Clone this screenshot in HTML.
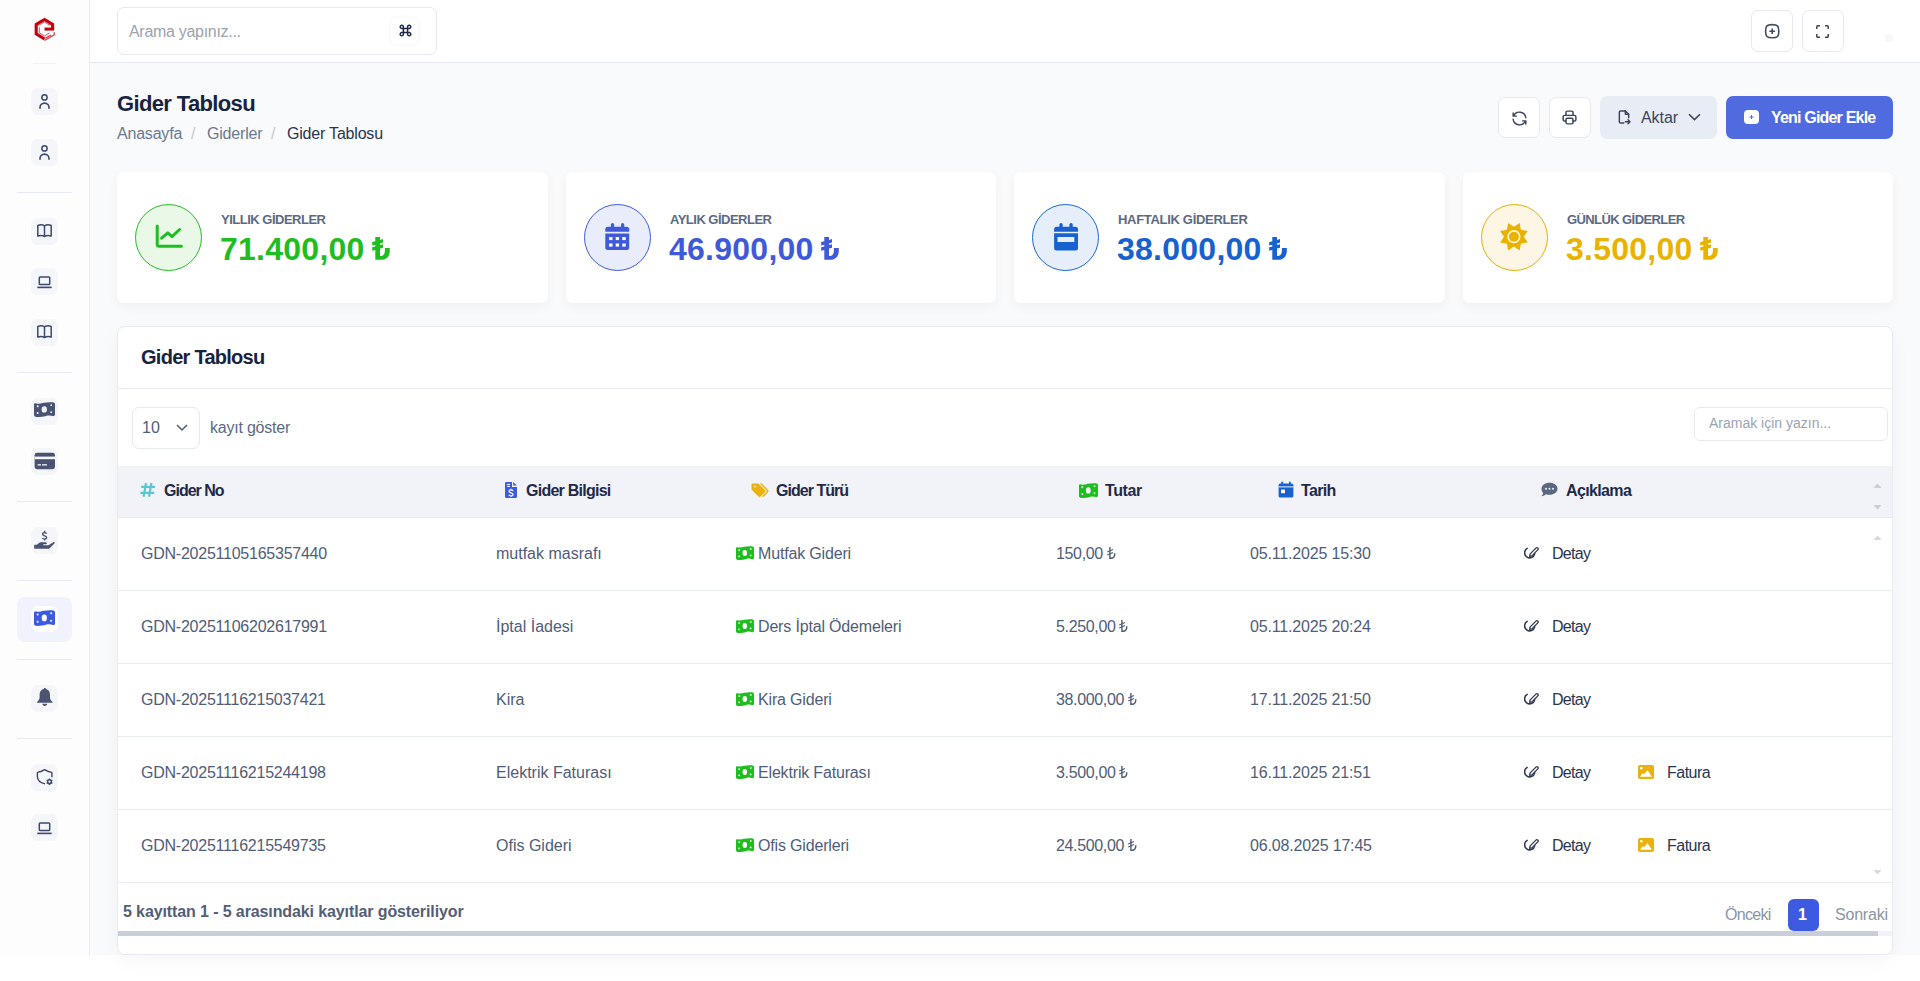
<!DOCTYPE html>
<html lang="tr">
<head>
<meta charset="utf-8">
<title>Gider Tablosu</title>
<style>
*{box-sizing:border-box;margin:0;padding:0}
html,body{width:1920px;height:981px;overflow:hidden;background:#fff;font-family:"Liberation Sans",sans-serif;color:#4f5d78}
.app{position:absolute;left:0;top:0;width:1920px;height:955px;background:#f9fafb}
.abs{position:absolute}
.side{position:absolute;left:0;top:0;width:90px;height:955px;background:#fdfdfe;border-right:1px solid #e7eaf3}
.tile{position:absolute;left:31px;width:27px;height:27px;border-radius:7px;background:#f4f6fa}
.tile svg{position:absolute;left:0;top:0}
.sep{position:absolute;left:17px;width:55px;height:1px;background:#e6e9f2}
.topbar{position:absolute;left:90px;top:0;width:1830px;height:63px;background:#fff;border-bottom:1px solid #e6e9f2}
.box{position:absolute;background:#fff;border:1px solid #e6e9f2;border-radius:7px}
.txt{position:absolute;white-space:nowrap;line-height:1}
.card{position:absolute;top:172px;width:430px;height:131px;background:#fff;border-radius:7px;box-shadow:0 4px 12px rgba(0,0,0,.045)}
.circ{position:absolute;left:18px;top:31.6px;width:67px;height:67px;border-radius:50%}
.lbl{position:absolute;left:104px;top:41px;font-weight:bold;font-size:13px;color:#5b6a84;white-space:nowrap;line-height:1}
.val{position:absolute;left:103px;top:61px;font-weight:bold;font-size:32px;letter-spacing:0.25px;white-space:nowrap;line-height:1}
.tcard{position:absolute;left:117px;top:326px;width:1776px;height:629px;background:#fff;border:1px solid #e7eaf2;border-radius:8px;box-shadow:0 6px 20px rgba(0,0,0,.04);overflow:hidden}
.th{position:absolute;font-weight:bold;font-size:16px;color:#1e2a4a;white-space:nowrap;line-height:1}
.td{position:absolute;font-size:16px;color:#4f5d78;white-space:nowrap;line-height:1}
.rowline{position:absolute;left:0;width:1774px;height:1px;background:#e8ebf3}
</style>
</head>
<body>
<div class="app">

<div class="side">
<svg class="abs" style="left:20px;top:10px" width="50" height="40" viewBox="0 0 50 40">
<path d="M32.6 19.2 V14.4 L24.5 9.5 L16.2 14.4 V23.9 L24.5 29" fill="none" stroke="#c4000f" stroke-width="3.1" stroke-linejoin="miter"/>
<rect x="24.5" y="17.6" width="9.6" height="3" fill="#c4000f"/>
<path d="M18.2 15.6 L24.5 12 L30.3 15.6 M19.3 17.2 V22.9 L24.5 25.9 L29.6 22.9" fill="none" stroke="#d6404a" stroke-width="0.9"/>
<path d="M24.5 30.6 L34.2 25 V22.3 M25.2 28.3 L31 24.9" fill="none" stroke="#d0303a" stroke-width="1.2"/>
</svg>
<div class="sep" style="top:63px;left:33px;width:23px;background:#f2f3f7"></div>
<div class="tile" style="top:88px"><svg width="27" height="27" viewBox="0 0 27 27"><circle cx="13.5" cy="9.4" r="2.6" fill="none" stroke="#3d4a6a" stroke-width="1.5"/><path d="M9 20.8 V19.6 A4.5 4.5 0 0 1 18 19.6 V20.8" fill="none" stroke="#3d4a6a" stroke-width="1.6"/></svg></div>
<div class="tile" style="top:139px"><svg width="27" height="27" viewBox="0 0 27 27"><circle cx="13.5" cy="9.4" r="2.6" fill="none" stroke="#3d4a6a" stroke-width="1.5"/><path d="M9 20.8 V19.6 A4.5 4.5 0 0 1 18 19.6 V20.8" fill="none" stroke="#3d4a6a" stroke-width="1.6"/></svg></div>
<div class="sep" style="top:192px"></div>
<div class="tile" style="top:218px"><svg width="27" height="27" viewBox="0 0 27 27"><path transform="translate(0,-0.7)" d="M6.8 8.2 C9 7.3 11.5 7.3 13.5 8.6 C15.5 7.3 18 7.3 20.2 8.2 V18.8 C18 18.1 15.5 18.1 13.5 19.2 C11.5 18.1 9 18.1 6.8 18.8 Z M13.5 8.6 V19" fill="none" stroke="#3d4a6a" stroke-width="1.5" stroke-linejoin="round"/></svg></div>
<div class="tile" style="top:268px"><svg width="27" height="27" viewBox="0 0 27 27"><rect x="8.3" y="9" width="10.4" height="7.6" rx="0.8" fill="none" stroke="#3d4a6a" stroke-width="1.5"/><path d="M6.3 19.4 H20.7" stroke="#3d4a6a" stroke-width="1.6"/></svg></div>
<div class="tile" style="top:319px"><svg width="27" height="27" viewBox="0 0 27 27"><path transform="translate(0,-0.7)" d="M6.8 8.2 C9 7.3 11.5 7.3 13.5 8.6 C15.5 7.3 18 7.3 20.2 8.2 V18.8 C18 18.1 15.5 18.1 13.5 19.2 C11.5 18.1 9 18.1 6.8 18.8 Z M13.5 8.6 V19" fill="none" stroke="#3d4a6a" stroke-width="1.5" stroke-linejoin="round"/></svg></div>
<div class="sep" style="top:372px"></div>
<div class="tile" style="top:398px"></div>
<svg class="abs" style="left:34px;top:402px" width="21" height="15" viewBox="0 0 20 15" preserveAspectRatio="none"><path d="M0 2.6 C0 1.4 1 1.1 2.2 1.4 C4.6 2.2 6.6 1.4 9 0.8 C11.5 0.2 14.5 0.1 17.6 0.2 C19 0.3 20 1 20 2 V12.6 C20 13.6 19.2 14.4 18 14.1 C16 13.3 13.6 13.3 11.4 13.9 C9 14.6 6.4 15 3.2 15 C1.4 15 0 14.4 0 13 Z" fill="#4a5472"/><ellipse cx="9.8" cy="7.4" rx="2.5" ry="3.2" fill="#f4f6fa"/><circle cx="3.5" cy="4.3" r="0.95" fill="#f4f6fa"/><circle cx="16.4" cy="3.1" r="0.95" fill="#f4f6fa"/><circle cx="3.5" cy="11" r="0.95" fill="#f4f6fa"/><circle cx="16.3" cy="10.1" r="0.95" fill="#f4f6fa"/></svg>
<div class="tile" style="top:448px"><svg width="27" height="27" viewBox="0 0 27 27"><rect x="3.6" y="4.8" width="20.4" height="16.4" rx="2.4" fill="#4a5472"/><rect x="3.6" y="8.6" width="20.4" height="2.6" fill="#f4f6fa"/><rect x="6.6" y="16.2" width="3.4" height="1.3" fill="#f4f6fa"/><rect x="11" y="16.2" width="5" height="1.3" fill="#f4f6fa"/></svg></div>
<div class="sep" style="top:501px"></div>
<div class="tile" style="top:527px"><svg width="27" height="27" viewBox="0 0 27 27"><path d="M15.6 6.7 C15.2 5.9 14.5 5.6 13.6 5.6 C12.4 5.6 11.6 6.2 11.6 7.1 C11.6 9.2 15.6 8.6 15.6 10.6 C15.6 11.6 14.7 12.1 13.6 12.1 C12.6 12.1 11.8 11.7 11.4 11 M13.6 3.8 V5.6 M13.6 12.1 V13.4" fill="none" stroke="#4a5472" stroke-width="1.4"/><path d="M3.2 17.8 H5.8 L8 16 C8.4 15.4 9 15.2 9.8 15.2 H15 C16 15.2 16 17.3 15 17.3 H12.6 C12 17.3 12 18.2 12.6 18.2 H17.4 L22.4 15.2 C23.4 14.8 24.2 15.8 23.4 16.6 L19 21 C18.6 21.6 18 21.8 17.4 21.8 H3.2 Z" fill="#4a5472"/></svg></div>
<div class="sep" style="top:580px"></div>
<div class="abs" style="left:17px;top:597px;width:55px;height:45px;border-radius:8px;background:#f0f2fd"></div>
<div class="abs" style="left:31px;top:606px;width:27px;height:26px;border-radius:7px;background:#fff"></div>
<svg class="abs" style="left:34px;top:610px" width="21" height="16" viewBox="0 0 20 15" preserveAspectRatio="none"><path d="M0 2.6 C0 1.4 1 1.1 2.2 1.4 C4.6 2.2 6.6 1.4 9 0.8 C11.5 0.2 14.5 0.1 17.6 0.2 C19 0.3 20 1 20 2 V12.6 C20 13.6 19.2 14.4 18 14.1 C16 13.3 13.6 13.3 11.4 13.9 C9 14.6 6.4 15 3.2 15 C1.4 15 0 14.4 0 13 Z" fill="#3d5be0"/><ellipse cx="9.8" cy="7.4" rx="2.5" ry="3.2" fill="#fff"/><circle cx="3.5" cy="4.3" r="0.95" fill="#fff"/><circle cx="16.4" cy="3.1" r="0.95" fill="#fff"/><circle cx="3.5" cy="11" r="0.95" fill="#fff"/><circle cx="16.3" cy="10.1" r="0.95" fill="#fff"/></svg>
<div class="sep" style="top:659px"></div>
<div class="tile" style="top:685px"><svg width="27" height="27" viewBox="0 0 27 27"><path d="M13.8 2.9 C14.5 2.9 14.9 3.4 14.9 4.1 C17.6 4.7 19 6.9 19 9.8 V12.4 C19 13.9 20 15.6 21.6 17 V17.8 H6 V17 C7.6 15.6 8.6 13.9 8.6 12.4 V9.8 C8.6 6.9 10 4.7 12.7 4.1 C12.7 3.4 13.1 2.9 13.8 2.9 Z" fill="#4a5472"/><path d="M11.4 18.8 H16.1 C16.1 20.2 15.1 20.9 13.8 20.9 C12.5 20.9 11.4 20.2 11.4 18.8 Z" fill="#4a5472"/></svg></div>
<div class="sep" style="top:738px"></div>
<div class="tile" style="top:764px"><svg width="27" height="27" viewBox="0 0 27 27"><path d="M20.9 13.3 V8.4 C18.4 8.2 16 7.3 13.6 5.7 C11.2 7.3 8.8 8.2 6.4 8.4 V12.4 C6.4 15.8 9.2 18.6 14 19.9" fill="none" stroke="#3d4a6a" stroke-width="1.4" stroke-linejoin="round"/><circle cx="18.5" cy="17.7" r="1.9" fill="none" stroke="#3d4a6a" stroke-width="1.5"/><path d="M18.50 19.70 L18.50 21.00 M16.77 18.70 L15.64 19.35 M16.77 16.70 L15.64 16.05 M18.50 15.70 L18.50 14.40 M20.23 16.70 L21.36 16.05 M20.23 18.70 L21.36 19.35" stroke="#3d4a6a" stroke-width="1.3"/></svg></div>
<div class="tile" style="top:814px"><svg width="27" height="27" viewBox="0 0 27 27"><rect x="8.3" y="9" width="10.4" height="7.6" rx="0.8" fill="none" stroke="#3d4a6a" stroke-width="1.5"/><path d="M6.3 19.4 H20.7" stroke="#3d4a6a" stroke-width="1.6"/></svg></div>
</div>
<div class="topbar"></div>
<div class="box" style="left:117px;top:7px;width:320px;height:48px;border-color:#e6e9f2"></div>
<div class="txt" style="left:129px;top:24px;font-size:16px;color:#9ba3b0;letter-spacing:-0.3px">Arama yapınız...</div>
<div class="abs" style="left:391px;top:18px;width:27px;height:26px;border-radius:6px;background:#fff;box-shadow:0 0 5px rgba(0,0,0,.06)"></div>
<svg class="abs" style="left:399px;top:24px" width="13" height="13" viewBox="0 0 13 13"><path d="M4.4 4.4 H8.6 V8.6 H4.4 Z M4.4 4.4 V2.9 A1.6 1.6 0 1 0 2.9 4.4 H4.4 M8.6 4.4 V2.9 A1.6 1.6 0 1 1 10.1 4.4 H8.6 M4.4 8.6 V10.1 A1.6 1.6 0 1 1 2.9 8.6 H4.4 M8.6 8.6 V10.1 A1.6 1.6 0 1 0 10.1 8.6 H8.6" fill="none" stroke="#1e2a4a" stroke-width="1.5"/></svg>
<div class="box" style="left:1751px;top:10px;width:42px;height:42px"></div>
<svg class="abs" style="left:1762px;top:21px" width="21" height="21" viewBox="0 0 21 21"><path d="M10.2 3.6 C15.6 3.6 16.8 4.8 16.8 10.2 C16.8 15.6 15.6 16.8 10.2 16.8 C4.8 16.8 3.6 15.6 3.6 10.2 C3.6 4.8 4.8 3.6 10.2 3.6 Z" fill="none" stroke="#3f4a66" stroke-width="1.6"/><path d="M10.2 7.4 V13 M7.4 10.2 H13" stroke="#3f4a66" stroke-width="1.6"/></svg>
<div class="box" style="left:1802px;top:10px;width:42px;height:42px"></div>
<svg class="abs" style="left:1812px;top:21px" width="21" height="21" viewBox="0 0 21 21"><path d="M4.8 8 V5.8 A1 1 0 0 1 5.8 4.8 H8 M13 4.8 H15.2 A1 1 0 0 1 16.2 5.8 V8 M16.2 13 V15.2 A1 1 0 0 1 15.2 16.2 H13 M8 16.2 H5.8 A1 1 0 0 1 4.8 15.2 V13" fill="none" stroke="#3a4560" stroke-width="1.5"/></svg>
<div class="abs" style="left:1885px;top:34px;width:8px;height:8px;border-radius:2px;background:#f8f8f8"></div>
<div class="txt" style="left:117px;top:93px;font-size:22px;font-weight:bold;color:#18233f;letter-spacing:-0.64px">Gider Tablosu</div>
<div class="txt" style="left:117px;top:126px;font-size:16px;color:#6b7891;letter-spacing:-0.2px">Anasayfa</div>
<div class="txt" style="left:191px;top:126px;font-size:16px;color:#c3c8d2">/</div>
<div class="txt" style="left:207px;top:126px;font-size:16px;color:#6b7891;letter-spacing:-0.2px">Giderler</div>
<div class="txt" style="left:271px;top:126px;font-size:16px;color:#c3c8d2">/</div>
<div class="txt" style="left:287px;top:126px;font-size:16px;color:#2a3450;letter-spacing:-0.2px">Gider Tablosu</div>
<div class="box" style="left:1498px;top:97px;width:42px;height:41px"></div>
<svg class="abs" style="left:1510px;top:109px" width="19" height="19" viewBox="0 0 24 24"><path d="M20 11a8.1 8.1 0 0 0 -15.5 -2m-.5 -4v4h4" fill="none" stroke="#3a4560" stroke-width="1.8" stroke-linecap="round" stroke-linejoin="round"/><path d="M4 13a8.1 8.1 0 0 0 15.5 2m.5 4v-4h-4" fill="none" stroke="#3a4560" stroke-width="1.8" stroke-linecap="round" stroke-linejoin="round"/></svg>
<div class="box" style="left:1549px;top:97px;width:42px;height:41px"></div>
<svg class="abs" style="left:1561px;top:109px" width="17" height="17" viewBox="0 0 24 24"><g fill="none" stroke="#3a4560" stroke-width="2.1" stroke-linecap="round" stroke-linejoin="round"><path d="M17 17h2a2 2 0 0 0 2 -2v-4a2 2 0 0 0 -2 -2h-14a2 2 0 0 0 -2 2v4a2 2 0 0 0 2 2h2"/><path d="M17 9v-4a2 2 0 0 0 -2 -2h-6a2 2 0 0 0 -2 2v4"/><path d="M7 15a2 2 0 0 1 2 -2h6a2 2 0 0 1 2 2v4a2 2 0 0 1 -2 2h-6a2 2 0 0 1 -2 -2z"/></g></svg>
<div class="abs" style="left:1600px;top:96px;width:117px;height:43px;border-radius:7px;background:#e8ecf4"></div>
<svg class="abs" style="left:1616px;top:109px" width="16" height="16" viewBox="0 0 24 24"><g fill="none" stroke="#3a4560" stroke-width="2.2" stroke-linecap="round" stroke-linejoin="round"><path d="M14 3v4a1 1 0 0 0 1 1h4"/><path d="M11.5 21h-4.5a2 2 0 0 1 -2 -2v-14a2 2 0 0 1 2 -2h7l5 5v5m-5 6h7m-3 -3l3 3l-3 3"/></g></svg>
<div class="txt" style="left:1641px;top:110px;font-size:16px;color:#3a4560;letter-spacing:-0.05px">Aktar</div>
<svg class="abs" style="left:1687px;top:111px" width="15" height="12" viewBox="0 0 15 12"><path d="M2 3.2 L7.5 8.6 L13 3.2" fill="none" stroke="#3a4560" stroke-width="1.6"/></svg>
<div class="abs" style="left:1726px;top:96px;width:167px;height:43px;border-radius:7px;background:#506be0"></div>
<div class="abs" style="left:1744px;top:110px;width:15px;height:14px;border-radius:4px;background:#fff"></div>
<svg class="abs" style="left:1744px;top:110px" width="15" height="14" viewBox="0 0 15 14"><path d="M7.5 5 V9 M5.5 7 H9.5" stroke="#506be0" stroke-width="1"/></svg>
<div class="txt" style="left:1771px;top:110px;font-size:16px;font-weight:bold;color:#fff;letter-spacing:-0.81px">Yeni Gider Ekle</div>
<div class="card" style="left:117px;width:431px">
<div class="circ" style="background:#e9f8e7;border:1.3px solid #22bf22"></div>
<svg class="abs" style="left:36px;top:50px" width="32" height="32" viewBox="0 0 32 32"><path d="M4.2 3.9 V22.2 A2 2 0 0 0 6.2 24.2 H28.4" fill="none" stroke="#1fbd1f" stroke-width="3" stroke-linecap="round" stroke-linejoin="round"/><path d="M8.6 16.2 L14.8 10.9 L19 14.6 L26.6 7.5" fill="none" stroke="#1fbd1f" stroke-width="3" stroke-linecap="round" stroke-linejoin="round"/></svg>
<div class="lbl" style="letter-spacing:-0.5px">YILLIK GİDERLER</div>
<div class="val" style="color:#1fbd1f">71.400,00<span style="display:inline-block;margin-left:7px"><svg width="18" height="23" viewBox="0 0 18 23" style="vertical-align:baseline"><path d="M3.3 0 H8 V2.9 L11 2.1 V5.6 L8 6.4 V8.1 L11 7.3 V10.8 L8 11.6 V19.1 C11.6 19.1 12.9 17 12.9 13.6 V11 H17.8 V13.8 C17.8 19.6 14.4 22.8 9 22.8 H3.3 V13 L0.2 13.8 V10.3 L3.3 9.5 V7.7 L0.2 8.5 V5.1 L3.3 4.3 Z" fill="#1fbd1f"/></svg></span></div>
</div>
<div class="card" style="left:566px;width:430px">
<div class="circ" style="background:#e9edfb;border:1.3px solid #3f5cdc"></div>
<svg class="abs" style="left:36px;top:50px" width="32" height="32" viewBox="0 0 32 32"><rect x="8.9" y="0.9" width="3.2" height="5.6" rx="1.6" fill="#3e5ad9"/><rect x="19" y="0.9" width="3.2" height="5.6" rx="1.6" fill="#3e5ad9"/><path d="M3.3 7.2 A2.5 2.5 0 0 1 5.8 4.7 H24.7 A2.5 2.5 0 0 1 27.2 7.2 V9.7 H3.3 Z" fill="#3e5ad9"/><path d="M3.3 11.6 H27.2 V25.5 A2.5 2.5 0 0 1 24.7 28 H5.8 A2.5 2.5 0 0 1 3.3 25.5 Z" fill="#3e5ad9"/><g fill="#fff"><rect x="7.1" y="15" width="3.4" height="3.1"/><rect x="13.7" y="15" width="3.4" height="3.1"/><rect x="20.3" y="15" width="3.4" height="3.1"/><rect x="7.1" y="21.5" width="3.4" height="3.1"/><rect x="13.7" y="21.5" width="3.4" height="3.1"/><rect x="20.3" y="21.5" width="3.4" height="3.1"/></g></svg>
<div class="lbl" style="letter-spacing:-0.51px">AYLIK GİDERLER</div>
<div class="val" style="color:#3e5ad9">46.900,00<span style="display:inline-block;margin-left:7px"><svg width="18" height="23" viewBox="0 0 18 23" style="vertical-align:baseline"><path d="M3.3 0 H8 V2.9 L11 2.1 V5.6 L8 6.4 V8.1 L11 7.3 V10.8 L8 11.6 V19.1 C11.6 19.1 12.9 17 12.9 13.6 V11 H17.8 V13.8 C17.8 19.6 14.4 22.8 9 22.8 H3.3 V13 L0.2 13.8 V10.3 L3.3 9.5 V7.7 L0.2 8.5 V5.1 L3.3 4.3 Z" fill="#3e5ad9"/></svg></span></div>
</div>
<div class="card" style="left:1014px;width:431px">
<div class="circ" style="background:#e6eefb;border:1.3px solid #1c66d2"></div>
<svg class="abs" style="left:36px;top:50px" width="32" height="32" viewBox="0 0 32 32"><rect x="9.4" y="0.9" width="3.3" height="5.6" rx="1.6" fill="#1762cf"/><rect x="19.4" y="0.9" width="3.3" height="5.6" rx="1.6" fill="#1762cf"/><path d="M4.1 7.2 A2.5 2.5 0 0 1 6.6 4.7 H25.5 A2.5 2.5 0 0 1 28 7.2 V9.7 H4.1 Z" fill="#1762cf"/><path d="M4.1 11.2 H28 V25.9 A2.5 2.5 0 0 1 25.5 28.4 H6.6 A2.5 2.5 0 0 1 4.1 25.9 Z" fill="#1762cf"/><rect x="7.5" y="15" width="16.8" height="5" fill="#e6eefb"/></svg>
<div class="lbl" style="letter-spacing:-0.31px">HAFTALIK GİDERLER</div>
<div class="val" style="color:#1762cf">38.000,00<span style="display:inline-block;margin-left:7px"><svg width="18" height="23" viewBox="0 0 18 23" style="vertical-align:baseline"><path d="M3.3 0 H8 V2.9 L11 2.1 V5.6 L8 6.4 V8.1 L11 7.3 V10.8 L8 11.6 V19.1 C11.6 19.1 12.9 17 12.9 13.6 V11 H17.8 V13.8 C17.8 19.6 14.4 22.8 9 22.8 H3.3 V13 L0.2 13.8 V10.3 L3.3 9.5 V7.7 L0.2 8.5 V5.1 L3.3 4.3 Z" fill="#1762cf"/></svg></span></div>
</div>
<div class="card" style="left:1463px;width:430px">
<div class="circ" style="background:#fdf6e4;border:1.3px solid #e5b000"></div>
<svg class="abs" style="left:36px;top:50px" width="32" height="32" viewBox="0 0 32 32"><polygon points="20.60,0.93 21.90,7.70 28.67,9.00 24.80,14.70 28.67,20.40 21.90,21.70 20.60,28.47 14.90,24.60 9.20,28.47 7.90,21.70 1.13,20.40 5.00,14.70 1.13,9.00 7.90,7.70 9.20,0.93 14.90,4.80" fill="#e8b300"/><circle cx="14.9" cy="14.7" r="6.6" fill="#fdf6e4"/><circle cx="14.9" cy="14.7" r="5" fill="#e8b300"/></svg>
<div class="lbl" style="letter-spacing:-0.59px">GÜNLÜK GİDERLER</div>
<div class="val" style="color:#e8b300">3.500,00<span style="display:inline-block;margin-left:7px"><svg width="18" height="23" viewBox="0 0 18 23" style="vertical-align:baseline"><path d="M3.3 0 H8 V2.9 L11 2.1 V5.6 L8 6.4 V8.1 L11 7.3 V10.8 L8 11.6 V19.1 C11.6 19.1 12.9 17 12.9 13.6 V11 H17.8 V13.8 C17.8 19.6 14.4 22.8 9 22.8 H3.3 V13 L0.2 13.8 V10.3 L3.3 9.5 V7.7 L0.2 8.5 V5.1 L3.3 4.3 Z" fill="#e8b300"/></svg></span></div>
</div>
<div class="tcard">
<div class="txt" style="left:23px;top:20px;font-size:20px;font-weight:bold;color:#18233f;letter-spacing:-0.73px">Gider Tablosu</div>
<div class="rowline" style="top:61px;background:#e6e9f2"></div>
<div class="box" style="left:14px;top:80px;width:68px;height:42px;border-radius:7px"></div>
<div class="txt" style="left:24px;top:93px;font-size:16px;color:#4f5d78">10</div>
<svg class="abs" style="left:57px;top:95px" width="14" height="12" viewBox="0 0 14 12"><path d="M2 3 L7 8 L12 3" fill="none" stroke="#4f5d78" stroke-width="1.5"/></svg>
<div class="txt" style="left:92px;top:93px;font-size:16px;color:#5a6a85;letter-spacing:-0.22px">kayıt göster</div>
<div class="box" style="left:1576px;top:80px;width:194px;height:34px;border-radius:6px"></div>
<div class="txt" style="left:1591px;top:89px;font-size:14px;color:#9aa3b3;letter-spacing:0px">Aramak için yazın...</div>
<div class="abs" style="left:0;top:139px;width:1774px;height:51px;background:#f1f3f8"></div>
<div class="rowline" style="top:190px"></div>
<svg class="abs" style="left:22px;top:155px" width="15" height="16" viewBox="0 0 15 16"><path d="M6 1 L3.6 14.8 M11.4 1 L9 14.8 M1.2 4.8 H15 M0.4 10.9 H14.2" stroke="#5cc6d0" stroke-width="2.2"/></svg>
<div class="th" style="left:46px;top:156px;letter-spacing:-1.0px">Gider No</div>
<svg class="abs" style="left:387px;top:155px" width="12" height="16" viewBox="0 0 12 16"><path d="M0 1.2 A1.2 1.2 0 0 1 1.2 0 H7 V5.1 H12 V14.8 A1.2 1.2 0 0 1 10.8 16 H1.2 A1.2 1.2 0 0 1 0 14.8 Z" fill="#3f5ce0"/><path d="M8.1 0.1 L11.9 3.6 H8.1 Z" fill="#3f5ce0"/><path d="M1.9 2.4 H5 M1.9 4.4 H5" stroke="#fff" stroke-width="1"/><path d="M8 8.9 C7.6 8.1 6.8 7.8 6 7.8 C4.9 7.8 4.1 8.4 4.1 9.3 C4.1 11.2 8.1 10.4 8.1 12.4 C8.1 13.3 7.2 13.9 6 13.9 C5.1 13.9 4.3 13.6 3.9 12.8 M6 6.7 V7.8 M6 13.9 V15" fill="none" stroke="#fff" stroke-width="1.2"/></svg>
<div class="th" style="left:408px;top:156px;letter-spacing:-0.75px">Gider Bilgisi</div>
<svg class="abs" style="left:633px;top:156px" width="18" height="16" viewBox="0 0 18 16"><path d="M0.5 1.6 A1.2 1.2 0 0 1 1.7 0.4 H7.4 L14.2 7.2 A1.2 1.2 0 0 1 14.2 8.9 L9.4 13.7 A1.2 1.2 0 0 1 7.7 13.7 L0.5 6.6 Z" fill="#e9b20f"/><ellipse cx="4" cy="3.6" rx="1.1" ry="0.8" fill="#f1f3f8"/><path d="M9.6 0.4 L16.4 7.2 A1.2 1.2 0 0 1 16.4 8.9 L11.6 13.7" fill="none" stroke="#e9b20f" stroke-width="1.4"/></svg>
<div class="th" style="left:658px;top:156px;letter-spacing:-0.96px">Gider Türü</div>
<svg class="abs" style="left:961px;top:156px" width="19" height="15" viewBox="0 0 20 15" preserveAspectRatio="none"><path d="M0 2.6 C0 1.4 1 1.1 2.2 1.4 C4.6 2.2 6.6 1.4 9 0.8 C11.5 0.2 14.5 0.1 17.6 0.2 C19 0.3 20 1 20 2 V12.6 C20 13.6 19.2 14.4 18 14.1 C16 13.3 13.6 13.3 11.4 13.9 C9 14.6 6.4 15 3.2 15 C1.4 15 0 14.4 0 13 Z" fill="#1fbd1f"/><ellipse cx="9.8" cy="7.4" rx="2.5" ry="3.2" fill="#f1f3f8"/><circle cx="3.5" cy="4.3" r="0.95" fill="#f1f3f8"/><circle cx="16.4" cy="3.1" r="0.95" fill="#f1f3f8"/><circle cx="3.5" cy="11" r="0.95" fill="#f1f3f8"/><circle cx="16.3" cy="10.1" r="0.95" fill="#f1f3f8"/></svg>
<div class="th" style="left:987px;top:156px;letter-spacing:-0.38px">Tutar</div>
<svg class="abs" style="left:1160px;top:154px" width="16" height="17" viewBox="0 0 16 17"><rect x="3.2" y="0.6" width="1.8" height="3" rx="0.8" fill="#1762cf"/><rect x="11" y="0.6" width="1.8" height="3" rx="0.8" fill="#1762cf"/><path d="M0.6 4 A1.6 1.6 0 0 1 2.2 2.4 H13.8 A1.6 1.6 0 0 1 15.4 4 V15 A1.6 1.6 0 0 1 13.8 16.6 H2.2 A1.6 1.6 0 0 1 0.6 15 Z" fill="#1762cf"/><rect x="0.6" y="5.4" width="14.8" height="1" fill="#f1f3f8"/><rect x="3" y="8.6" width="4" height="3.6" fill="#fff"/></svg>
<div class="th" style="left:1183px;top:156px;letter-spacing:-0.65px">Tarih</div>
<svg class="abs" style="left:1423px;top:155px" width="17" height="15" viewBox="0 0 17 15"><path d="M8.5 0.8 C13 0.8 16.5 3.4 16.5 6.8 C16.5 10.2 13 12.8 8.5 12.8 C7.2 12.8 6 12.6 5 12.2 C3.6 13.4 2 14 0.4 14.2 C1.4 13.2 2 12.2 2.2 11 C1 10 0.5 8.5 0.5 6.8 C0.5 3.4 4 0.8 8.5 0.8 Z" fill="#5b6882"/><circle cx="5" cy="6.8" r="1" fill="#f1f3f8"/><circle cx="8.5" cy="6.8" r="1" fill="#f1f3f8"/><circle cx="12" cy="6.8" r="1" fill="#f1f3f8"/></svg>
<div class="th" style="left:1448px;top:156px;letter-spacing:-0.63px">Açıklama</div>
<svg class="abs" style="left:1755px;top:155px" width="9" height="30" viewBox="0 0 9 30"><path d="M0.5 6 L4.5 1.5 L8.5 6 Z" fill="#c9ced8"/><path d="M0.5 23 L4.5 27.5 L8.5 23 Z" fill="#c9ced8"/></svg>
<svg class="abs" style="left:1755px;top:207px" width="9" height="7" viewBox="0 0 9 7"><path d="M0.5 6 L4.5 1.5 L8.5 6 Z" fill="#d5d9e0"/></svg>
<svg class="abs" style="left:1755px;top:542px" width="9" height="7" viewBox="0 0 9 7"><path d="M0.5 1 L4.5 5.5 L8.5 1 Z" fill="#d5d9e0"/></svg>
<div class="td" style="left:23px;top:219px;letter-spacing:-0.24px">GDN-20251105165357440</div>
<div class="td" style="left:378px;top:219px;letter-spacing:0px">mutfak masrafı</div>
<svg class="abs" style="left:618px;top:219px" width="18" height="14" viewBox="0 0 20 15" preserveAspectRatio="none"><path d="M0 2.6 C0 1.4 1 1.1 2.2 1.4 C4.6 2.2 6.6 1.4 9 0.8 C11.5 0.2 14.5 0.1 17.6 0.2 C19 0.3 20 1 20 2 V12.6 C20 13.6 19.2 14.4 18 14.1 C16 13.3 13.6 13.3 11.4 13.9 C9 14.6 6.4 15 3.2 15 C1.4 15 0 14.4 0 13 Z" fill="#1fbd1f"/><ellipse cx="9.8" cy="7.4" rx="2.5" ry="3.2" fill="#fff"/><circle cx="3.5" cy="4.3" r="0.95" fill="#fff"/><circle cx="16.4" cy="3.1" r="0.95" fill="#fff"/><circle cx="3.5" cy="11" r="0.95" fill="#fff"/><circle cx="16.3" cy="10.1" r="0.95" fill="#fff"/></svg>
<div class="td" style="left:640px;top:219px;letter-spacing:-0.17px">Mutfak Gideri</div>
<div class="td" style="left:938px;top:219px;letter-spacing:-0.35px">150,00<span style="display:inline-block;margin-left:4px"><svg width="9" height="12" viewBox="0 0 9 12" style="vertical-align:baseline"><path d="M2.9 0 V11.3 H4 C6.4 11.3 7.8 9.5 7.8 6.2" fill="none" stroke="#4f5d78" stroke-width="1.4"/><path d="M0.2 5 L6 2.5 M0.2 8 L6 5.5" stroke="#4f5d78" stroke-width="1.2"/></svg></span></div>
<div class="td" style="left:1132px;top:219px;letter-spacing:-0.17px">05.11.2025 15:30</div>
<svg class="abs" style="left:1406px;top:218px" width="15" height="15" viewBox="0 0 15 15"><path d="M3.2 3.3 A5.1 5.1 0 1 0 10.7 8.8" fill="none" stroke="#2e3852" stroke-width="1.5" stroke-linecap="round"/><path d="M6 9.1 L11.9 3.1 A1.3 1.3 0 0 1 13.8 4.9 L7.9 10.9 L5.7 11.3 Z" fill="none" stroke="#2e3852" stroke-width="1.3" stroke-linejoin="round"/></svg>
<div class="td" style="left:1434px;top:219px;color:#2b3550;letter-spacing:-0.7px">Detay</div>
<div class="rowline" style="top:263px"></div>
<div class="td" style="left:23px;top:292px;letter-spacing:-0.24px">GDN-20251106202617991</div>
<div class="td" style="left:378px;top:292px;letter-spacing:0px">İptal İadesi</div>
<svg class="abs" style="left:618px;top:292px" width="18" height="14" viewBox="0 0 20 15" preserveAspectRatio="none"><path d="M0 2.6 C0 1.4 1 1.1 2.2 1.4 C4.6 2.2 6.6 1.4 9 0.8 C11.5 0.2 14.5 0.1 17.6 0.2 C19 0.3 20 1 20 2 V12.6 C20 13.6 19.2 14.4 18 14.1 C16 13.3 13.6 13.3 11.4 13.9 C9 14.6 6.4 15 3.2 15 C1.4 15 0 14.4 0 13 Z" fill="#1fbd1f"/><ellipse cx="9.8" cy="7.4" rx="2.5" ry="3.2" fill="#fff"/><circle cx="3.5" cy="4.3" r="0.95" fill="#fff"/><circle cx="16.4" cy="3.1" r="0.95" fill="#fff"/><circle cx="3.5" cy="11" r="0.95" fill="#fff"/><circle cx="16.3" cy="10.1" r="0.95" fill="#fff"/></svg>
<div class="td" style="left:640px;top:292px;letter-spacing:-0.17px">Ders İptal Ödemeleri</div>
<div class="td" style="left:938px;top:292px;letter-spacing:-0.35px">5.250,00<span style="display:inline-block;margin-left:4px"><svg width="9" height="12" viewBox="0 0 9 12" style="vertical-align:baseline"><path d="M2.9 0 V11.3 H4 C6.4 11.3 7.8 9.5 7.8 6.2" fill="none" stroke="#4f5d78" stroke-width="1.4"/><path d="M0.2 5 L6 2.5 M0.2 8 L6 5.5" stroke="#4f5d78" stroke-width="1.2"/></svg></span></div>
<div class="td" style="left:1132px;top:292px;letter-spacing:-0.17px">05.11.2025 20:24</div>
<svg class="abs" style="left:1406px;top:291px" width="15" height="15" viewBox="0 0 15 15"><path d="M3.2 3.3 A5.1 5.1 0 1 0 10.7 8.8" fill="none" stroke="#2e3852" stroke-width="1.5" stroke-linecap="round"/><path d="M6 9.1 L11.9 3.1 A1.3 1.3 0 0 1 13.8 4.9 L7.9 10.9 L5.7 11.3 Z" fill="none" stroke="#2e3852" stroke-width="1.3" stroke-linejoin="round"/></svg>
<div class="td" style="left:1434px;top:292px;color:#2b3550;letter-spacing:-0.7px">Detay</div>
<div class="rowline" style="top:336px"></div>
<div class="td" style="left:23px;top:365px;letter-spacing:-0.24px">GDN-20251116215037421</div>
<div class="td" style="left:378px;top:365px;letter-spacing:0px">Kira</div>
<svg class="abs" style="left:618px;top:365px" width="18" height="14" viewBox="0 0 20 15" preserveAspectRatio="none"><path d="M0 2.6 C0 1.4 1 1.1 2.2 1.4 C4.6 2.2 6.6 1.4 9 0.8 C11.5 0.2 14.5 0.1 17.6 0.2 C19 0.3 20 1 20 2 V12.6 C20 13.6 19.2 14.4 18 14.1 C16 13.3 13.6 13.3 11.4 13.9 C9 14.6 6.4 15 3.2 15 C1.4 15 0 14.4 0 13 Z" fill="#1fbd1f"/><ellipse cx="9.8" cy="7.4" rx="2.5" ry="3.2" fill="#fff"/><circle cx="3.5" cy="4.3" r="0.95" fill="#fff"/><circle cx="16.4" cy="3.1" r="0.95" fill="#fff"/><circle cx="3.5" cy="11" r="0.95" fill="#fff"/><circle cx="16.3" cy="10.1" r="0.95" fill="#fff"/></svg>
<div class="td" style="left:640px;top:365px;letter-spacing:-0.17px">Kira Gideri</div>
<div class="td" style="left:938px;top:365px;letter-spacing:-0.35px">38.000,00<span style="display:inline-block;margin-left:4px"><svg width="9" height="12" viewBox="0 0 9 12" style="vertical-align:baseline"><path d="M2.9 0 V11.3 H4 C6.4 11.3 7.8 9.5 7.8 6.2" fill="none" stroke="#4f5d78" stroke-width="1.4"/><path d="M0.2 5 L6 2.5 M0.2 8 L6 5.5" stroke="#4f5d78" stroke-width="1.2"/></svg></span></div>
<div class="td" style="left:1132px;top:365px;letter-spacing:-0.17px">17.11.2025 21:50</div>
<svg class="abs" style="left:1406px;top:364px" width="15" height="15" viewBox="0 0 15 15"><path d="M3.2 3.3 A5.1 5.1 0 1 0 10.7 8.8" fill="none" stroke="#2e3852" stroke-width="1.5" stroke-linecap="round"/><path d="M6 9.1 L11.9 3.1 A1.3 1.3 0 0 1 13.8 4.9 L7.9 10.9 L5.7 11.3 Z" fill="none" stroke="#2e3852" stroke-width="1.3" stroke-linejoin="round"/></svg>
<div class="td" style="left:1434px;top:365px;color:#2b3550;letter-spacing:-0.7px">Detay</div>
<div class="rowline" style="top:409px"></div>
<div class="td" style="left:23px;top:438px;letter-spacing:-0.24px">GDN-20251116215244198</div>
<div class="td" style="left:378px;top:438px;letter-spacing:0px">Elektrik Faturası</div>
<svg class="abs" style="left:618px;top:438px" width="18" height="14" viewBox="0 0 20 15" preserveAspectRatio="none"><path d="M0 2.6 C0 1.4 1 1.1 2.2 1.4 C4.6 2.2 6.6 1.4 9 0.8 C11.5 0.2 14.5 0.1 17.6 0.2 C19 0.3 20 1 20 2 V12.6 C20 13.6 19.2 14.4 18 14.1 C16 13.3 13.6 13.3 11.4 13.9 C9 14.6 6.4 15 3.2 15 C1.4 15 0 14.4 0 13 Z" fill="#1fbd1f"/><ellipse cx="9.8" cy="7.4" rx="2.5" ry="3.2" fill="#fff"/><circle cx="3.5" cy="4.3" r="0.95" fill="#fff"/><circle cx="16.4" cy="3.1" r="0.95" fill="#fff"/><circle cx="3.5" cy="11" r="0.95" fill="#fff"/><circle cx="16.3" cy="10.1" r="0.95" fill="#fff"/></svg>
<div class="td" style="left:640px;top:438px;letter-spacing:-0.17px">Elektrik Faturası</div>
<div class="td" style="left:938px;top:438px;letter-spacing:-0.35px">3.500,00<span style="display:inline-block;margin-left:4px"><svg width="9" height="12" viewBox="0 0 9 12" style="vertical-align:baseline"><path d="M2.9 0 V11.3 H4 C6.4 11.3 7.8 9.5 7.8 6.2" fill="none" stroke="#4f5d78" stroke-width="1.4"/><path d="M0.2 5 L6 2.5 M0.2 8 L6 5.5" stroke="#4f5d78" stroke-width="1.2"/></svg></span></div>
<div class="td" style="left:1132px;top:438px;letter-spacing:-0.17px">16.11.2025 21:51</div>
<svg class="abs" style="left:1406px;top:437px" width="15" height="15" viewBox="0 0 15 15"><path d="M3.2 3.3 A5.1 5.1 0 1 0 10.7 8.8" fill="none" stroke="#2e3852" stroke-width="1.5" stroke-linecap="round"/><path d="M6 9.1 L11.9 3.1 A1.3 1.3 0 0 1 13.8 4.9 L7.9 10.9 L5.7 11.3 Z" fill="none" stroke="#2e3852" stroke-width="1.3" stroke-linejoin="round"/></svg>
<div class="td" style="left:1434px;top:438px;color:#2b3550;letter-spacing:-0.7px">Detay</div>
<svg class="abs" style="left:1520px;top:438px" width="16" height="14" viewBox="0 0 16 14"><rect x="0" y="0" width="16" height="14" rx="1.8" fill="#e9b20f"/><circle cx="3.3" cy="3.3" r="1.3" fill="#fff"/><path d="M2 11.7 L4.6 8.2 L5.9 9.3 L9.6 5.3 L13.8 11.7 Z" fill="#fff"/></svg>
<div class="td" style="left:1549px;top:438px;color:#2b3550;letter-spacing:-0.5px">Fatura</div>
<div class="rowline" style="top:482px"></div>
<div class="td" style="left:23px;top:511px;letter-spacing:-0.24px">GDN-20251116215549735</div>
<div class="td" style="left:378px;top:511px;letter-spacing:0px">Ofis Gideri</div>
<svg class="abs" style="left:618px;top:511px" width="18" height="14" viewBox="0 0 20 15" preserveAspectRatio="none"><path d="M0 2.6 C0 1.4 1 1.1 2.2 1.4 C4.6 2.2 6.6 1.4 9 0.8 C11.5 0.2 14.5 0.1 17.6 0.2 C19 0.3 20 1 20 2 V12.6 C20 13.6 19.2 14.4 18 14.1 C16 13.3 13.6 13.3 11.4 13.9 C9 14.6 6.4 15 3.2 15 C1.4 15 0 14.4 0 13 Z" fill="#1fbd1f"/><ellipse cx="9.8" cy="7.4" rx="2.5" ry="3.2" fill="#fff"/><circle cx="3.5" cy="4.3" r="0.95" fill="#fff"/><circle cx="16.4" cy="3.1" r="0.95" fill="#fff"/><circle cx="3.5" cy="11" r="0.95" fill="#fff"/><circle cx="16.3" cy="10.1" r="0.95" fill="#fff"/></svg>
<div class="td" style="left:640px;top:511px;letter-spacing:-0.17px">Ofis Giderleri</div>
<div class="td" style="left:938px;top:511px;letter-spacing:-0.35px">24.500,00<span style="display:inline-block;margin-left:4px"><svg width="9" height="12" viewBox="0 0 9 12" style="vertical-align:baseline"><path d="M2.9 0 V11.3 H4 C6.4 11.3 7.8 9.5 7.8 6.2" fill="none" stroke="#4f5d78" stroke-width="1.4"/><path d="M0.2 5 L6 2.5 M0.2 8 L6 5.5" stroke="#4f5d78" stroke-width="1.2"/></svg></span></div>
<div class="td" style="left:1132px;top:511px;letter-spacing:-0.17px">06.08.2025 17:45</div>
<svg class="abs" style="left:1406px;top:510px" width="15" height="15" viewBox="0 0 15 15"><path d="M3.2 3.3 A5.1 5.1 0 1 0 10.7 8.8" fill="none" stroke="#2e3852" stroke-width="1.5" stroke-linecap="round"/><path d="M6 9.1 L11.9 3.1 A1.3 1.3 0 0 1 13.8 4.9 L7.9 10.9 L5.7 11.3 Z" fill="none" stroke="#2e3852" stroke-width="1.3" stroke-linejoin="round"/></svg>
<div class="td" style="left:1434px;top:511px;color:#2b3550;letter-spacing:-0.7px">Detay</div>
<svg class="abs" style="left:1520px;top:511px" width="16" height="14" viewBox="0 0 16 14"><rect x="0" y="0" width="16" height="14" rx="1.8" fill="#e9b20f"/><circle cx="3.3" cy="3.3" r="1.3" fill="#fff"/><path d="M2 11.7 L4.6 8.2 L5.9 9.3 L9.6 5.3 L13.8 11.7 Z" fill="#fff"/></svg>
<div class="td" style="left:1549px;top:511px;color:#2b3550;letter-spacing:-0.5px">Fatura</div>
<div class="rowline" style="top:555px"></div>
<div class="txt" style="left:5px;top:577px;font-size:16px;font-weight:bold;color:#535e78;letter-spacing:-0.11px">5 kayıttan 1 - 5 arasındaki kayıtlar gösteriliyor</div>
<div class="txt" style="left:1607px;top:580px;font-size:16px;color:#8a94a6;letter-spacing:-0.68px">Önceki</div>
<div class="abs" style="left:1670px;top:572px;width:31px;height:32px;border-radius:6px;background:#3d5be0"></div>
<div class="txt" style="left:1680px;top:580px;font-size:16px;font-weight:bold;color:#fff">1</div>
<div class="txt" style="left:1717px;top:580px;font-size:16px;color:#8a94a6;letter-spacing:-0.2px">Sonraki</div>
<div class="abs" style="left:0;top:604px;width:1774px;height:5px;background:#f1f3f8"></div>
<div class="abs" style="left:0;top:604px;width:1760px;height:5px;background:#c9ced8"></div>
</div>
</div>
</body>
</html>
